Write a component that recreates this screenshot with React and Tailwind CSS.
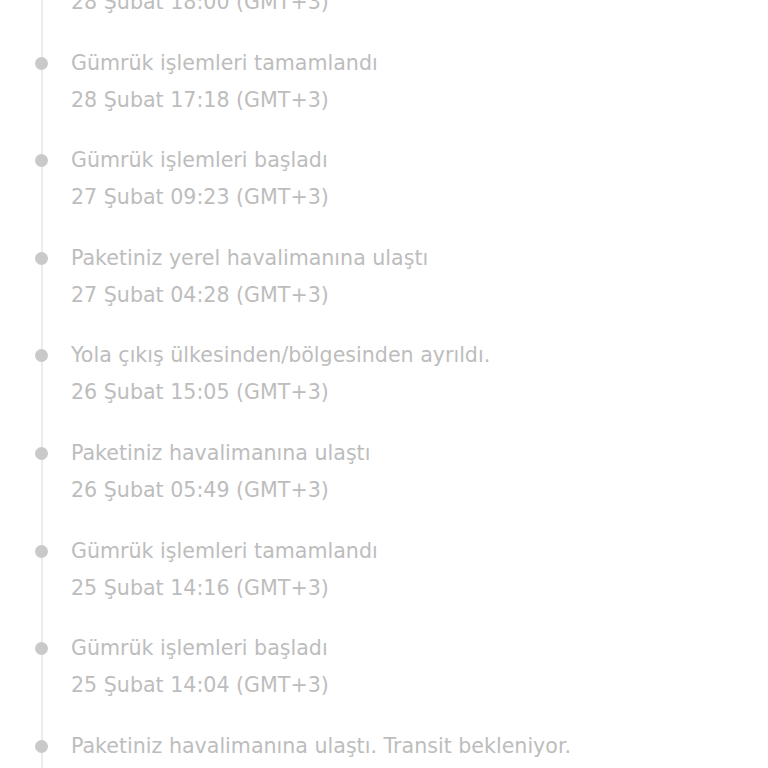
import React from 'react';

const events = [
  { title: 'Paketiniz yerel teslimat merkezine ulaştı', date: '28 Şubat 18:00 (GMT+3)' },
  { title: 'Gümrük işlemleri tamamlandı', date: '28 Şubat 17:18 (GMT+3)' },
  { title: 'Gümrük işlemleri başladı', date: '27 Şubat 09:23 (GMT+3)' },
  { title: 'Paketiniz yerel havalimanına ulaştı', date: '27 Şubat 04:28 (GMT+3)' },
  { title: 'Yola çıkış ülkesinden/bölgesinden ayrıldı.', date: '26 Şubat 15:05 (GMT+3)' },
  { title: 'Paketiniz havalimanına ulaştı', date: '26 Şubat 05:49 (GMT+3)' },
  { title: 'Gümrük işlemleri tamamlandı', date: '25 Şubat 14:16 (GMT+3)' },
  { title: 'Gümrük işlemleri başladı', date: '25 Şubat 14:04 (GMT+3)' },
  { title: 'Paketiniz havalimanına ulaştı. Transit bekleniyor.', date: '25 Şubat 10:12 (GMT+3)' },
];

export default function App() {
  return (
    <div className="h-[768px] overflow-hidden bg-white" style={{ fontFamily: '"DejaVu Sans", sans-serif' }}>
      <ul className="ml-[41px] mt-[-53px] border-l-2 border-[#ececec]">
        {events.map((ev, i) => (
          <li key={i} className="relative pl-[28px] pb-[23.6px] text-[20.6px] leading-[37px] text-[#bdbdbd]">
            {/* timeline dot sits over the line */}
            <span className="absolute left-[-8px] top-[12px] h-[13px] w-[13px] rounded-full bg-[#c9c9c9]" />
            <div>{ev.title}</div>
            <div>{ev.date}</div>
          </li>
        ))}
      </ul>
    </div>
  );
}
